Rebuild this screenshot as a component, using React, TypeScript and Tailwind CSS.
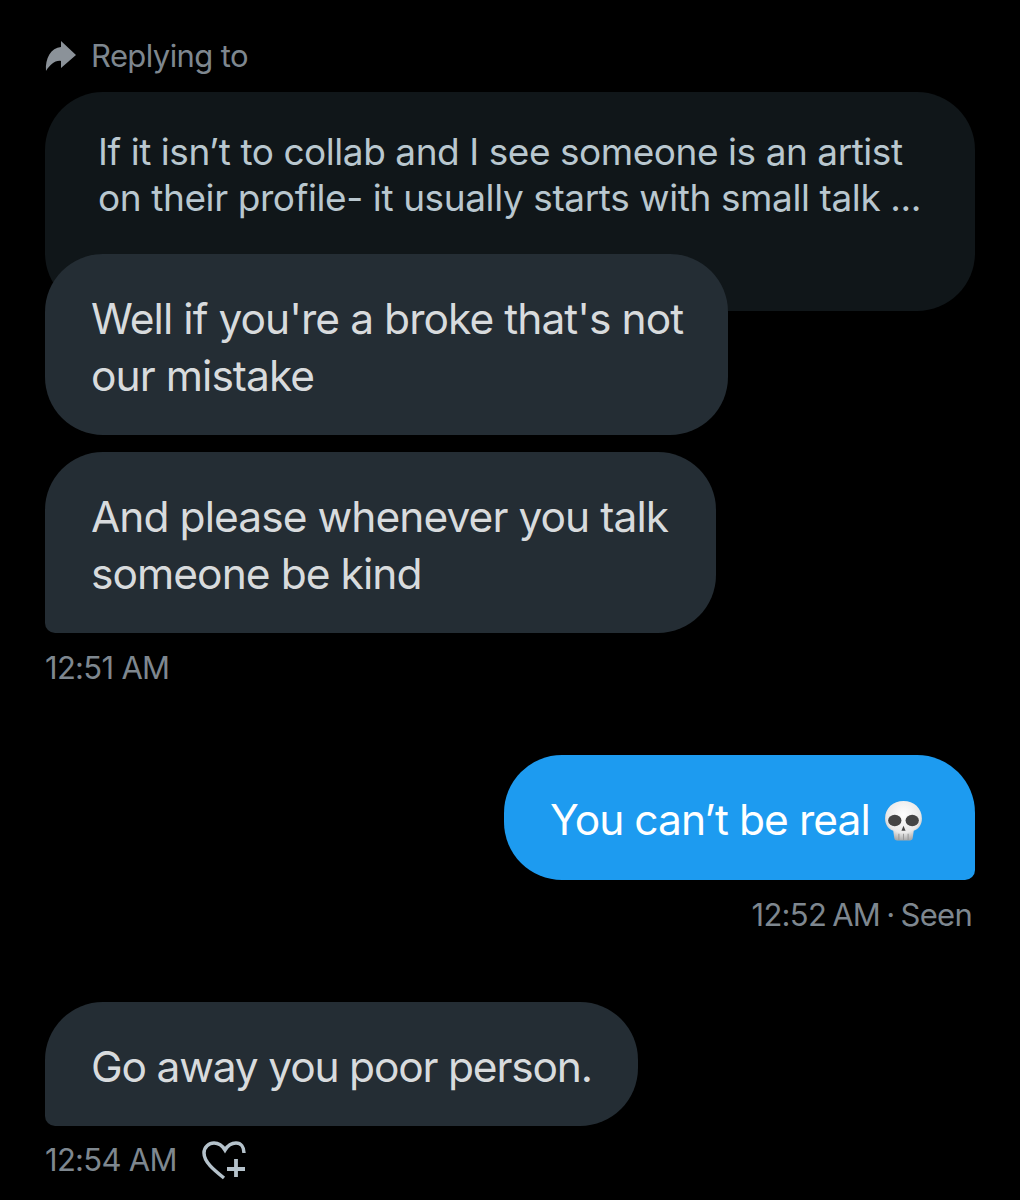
import React from 'react';

const FONT = "font-['Inter','Noto_Sans',sans-serif]";

// Grey forward arrow in front of the reply label
const ReplyArrow = () => (
  <svg viewBox="0 0 32 32" className="w-[32px] h-[32px] shrink-0" fill="#8b9299">
    <path d="M1 31 C0 18 6 8 16 7 L16 1 L31 15 L16 28 L16 21 C10 20 5 25 1 31 Z" />
  </svg>
);

const Skull = () => (
  <svg viewBox="0 0 36 40" className="w-[37px] h-[41px] shrink-0 ml-[16px] mt-[1px] -translate-x-[1px]">
    <defs>
      <radialGradient id="bone" cx="50%" cy="35%" r="65%">
        <stop offset="0%" stopColor="#ffffff" />
        <stop offset="70%" stopColor="#e9e9e9" />
        <stop offset="100%" stopColor="#a9a9a9" />
      </radialGradient>
    </defs>
    <path
      d="M18 1 C8 1 0 8 0 18 C0 24 3 28 8 30 L9 37 C9 39 11 39.5 13 39.5 L23 39.5 C25 39.5 27 39 27 37 L28 30 C33 28 36 24 36 18 C36 8 28 1 18 1 Z"
      fill="url(#bone)"
    />
    <ellipse cx="9.5" cy="20" rx="6.5" ry="5.5" fill="#444" />
    <ellipse cx="26.5" cy="20" rx="6.5" ry="5.5" fill="#444" />
    <path d="M18 25 L20 30 L16 30 Z" fill="#444" />
    <path d="M13.5 33 V39 M18 33 V39 M22.5 33 V39" stroke="#9a9a9a" strokeWidth="1" />
  </svg>
);

const HeartPlus = () => (
  <svg viewBox="0 0 46 40" className="w-[46px] h-[40px]" fill="none" stroke="#b5c2cb" strokeWidth="3.5">
    <path d="M22 38 C12 30 2 22 2 13 C2 7 7 3 12 3 C16 3 20 5 23 10 C26 5 30 3 34 3 C39 3 42 7 42 13" />
    <path d="M34 19 V37 M25 29 H43" strokeWidth="3.8" />
  </svg>
);

const Bubble = ({ text, className }: { text: string[]; className: string }) => (
  <div className={`bg-[#242d34] text-[#d8dbdd] text-[42.5px] tracking-[-0.95px] leading-[57px] pl-[46px] pt-[5px] flex flex-col justify-center ${className}`}>
    {text.map((line) => (
      <span key={line} className="whitespace-nowrap">{line}</span>
    ))}
  </div>
);

const Stamp = ({ children, className = '' }: { children: React.ReactNode; className?: string }) => (
  <div className={`text-[#7e878f] text-[31px] tracking-[-0.7px] leading-[40px] ${className}`}>{children}</div>
);

export default function App() {
  return (
    <div className={`${FONT} bg-black w-[1020px] h-[1200px] overflow-hidden px-[45px] pt-[36px] flex flex-col`}>
      <div className="flex items-center gap-[14px] h-[40px]">
        <ReplyArrow />
        <span className="text-[#7e878f] text-[31px] tracking-[-0.6px]">Replying to</span>
      </div>

      {/* quoted message sits underneath the first bubble */}
      <div className="mt-[16px] w-[930px] h-[219px] rounded-[58px] bg-[#101619] pl-[53px] pt-[37px] text-[#b9c7cf] text-[37px] tracking-[-0.45px] leading-[46px]">
        <div className="whitespace-nowrap">If it isn’t to collab and I see someone is an artist</div>
        <div className="whitespace-nowrap tracking-[-0.4px]">on their profile- it usually starts with small talk ...</div>
      </div>

      <Bubble
        text={["Well if you're a broke that's not", 'our mistake']}
        className="relative -mt-[57px] w-[683px] h-[181px] rounded-[58px]"
      />
      <Bubble
        text={['And please whenever you talk', 'someone be kind']}
        className="mt-[17px] w-[671px] h-[181px] rounded-[58px] rounded-bl-[10px]"
      />
      <Stamp className="mt-[15px]">12:51 AM</Stamp>

      <div className="mt-[67px] self-end w-[471px] h-[125px] rounded-[58px] rounded-br-[10px] bg-[#1d9bf0] text-white text-[42.5px] tracking-[-0.95px] pl-[46px] pt-[5px] flex items-center">
        <span className="whitespace-nowrap">You can’t be real</span>
        <Skull />
      </div>
      <Stamp className="mt-[15px] self-end pr-[3px] tracking-[-0.5px] [word-spacing:-2px]">12:52 AM · Seen</Stamp>

      <Bubble
        text={['Go away you poor person.']}
        className="mt-[67px] w-[593px] h-[124px] rounded-[58px] rounded-bl-[10px] tracking-[-1.2px]"
      />
      <div className="mt-[14px] flex items-center gap-[25px]">
        <Stamp>12:54 AM</Stamp>
        <HeartPlus />
      </div>
    </div>
  );
}
